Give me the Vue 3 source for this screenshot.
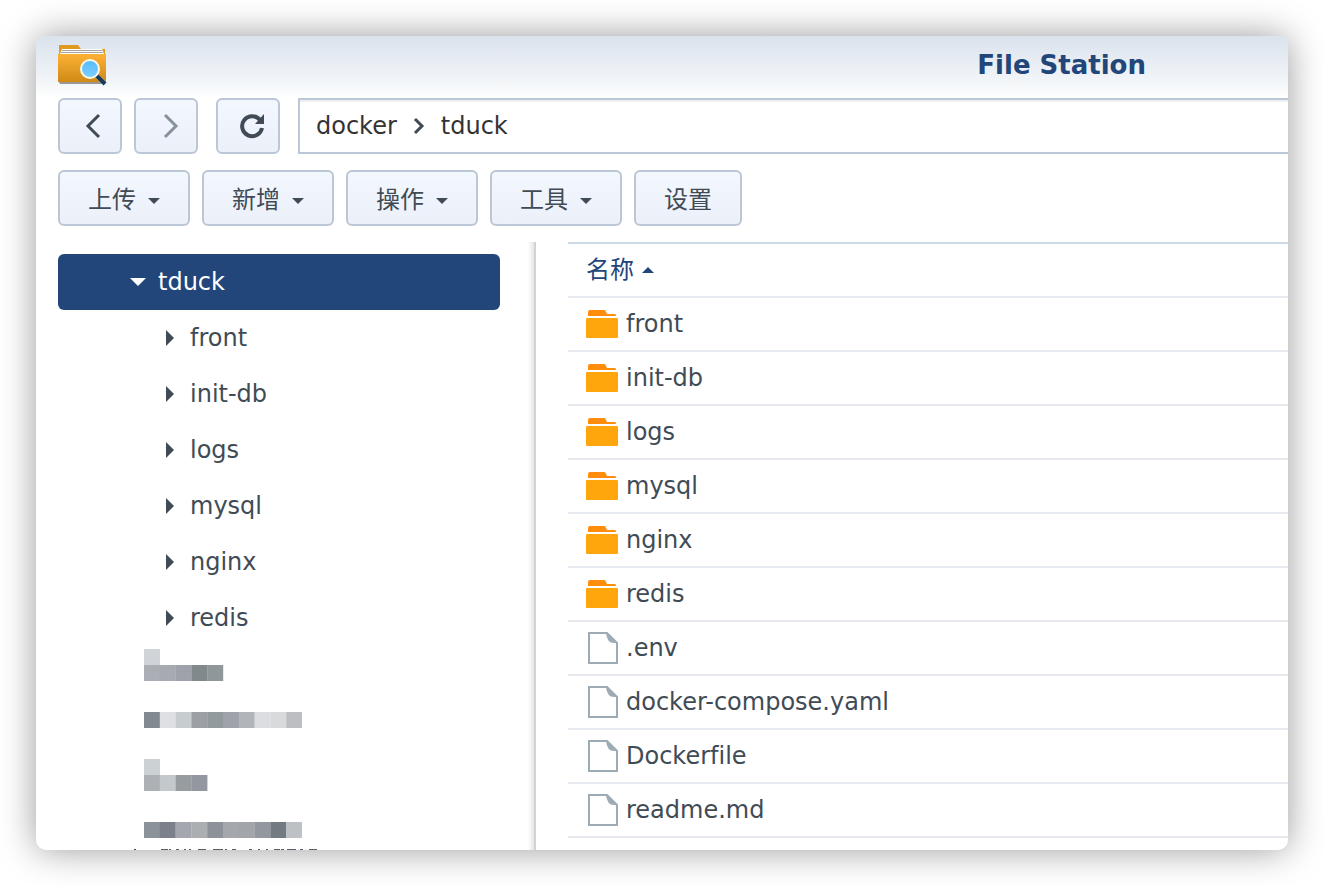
<script setup>
const menus = ['上传', '新增', '操作', '工具']
const folders = ['front', 'init-db', 'logs', 'mysql', 'nginx', 'redis']
const files = ['.env', 'docker-compose.yaml', 'Dockerfile', 'readme.md']

// Redacted tree entries: [column, row, colour] on a 10-column grid of cells
const line = (row, colours) => colours.map((c, i) => [i, row, c])
const mosaic = [
  { rows: 2, cells: [[0, 0, '#d0d4d8'], ...line(1, ['#abaeb4', '#a7aab0', '#9fa2ab', '#82898d', '#8f979a'])] },
  { rows: 1, cells: line(0, ['#838991', '#dfe0e3', '#c7cccf', '#9ca0a5', '#939a9e', '#9fa3a9', '#b1b5bb', '#dcdde1', '#d9dadc', '#bdbec4']) },
  { rows: 2, cells: [[0, 0, '#ccd2d3'], ...line(1, ['#adb1b6', '#c2c8cb', '#969c9f', '#9297a0'])] },
  { rows: 1, cells: line(0, ['#8c9299', '#7c808a', '#a4a7ae', '#abafb2', '#8d919a', '#a4a7ac', '#a2a5aa', '#9397a0', '#727b81', '#bdc1c5']) },
]
// Feet of the letters that stay visible under the last redaction
const feet = [[31, 7], [39, 2], [46, 3], [54, 2], [59, 2], [68, 8], [83, 8], [91, 2], [95, 2], [102, 4], [119, 3], [128, 2], [136, 2], [144, 6], [151, 3], [157, 9], [170, 3], [179, 8]]
</script>

<template>
  <div class="desktop">
    <main class="window">
      <header class="titlebar">
        <svg class="app-icon" width="50" height="42" viewBox="0 0 50 42" aria-hidden="true">
          <defs>
            <linearGradient id="folder-face" x1="0" y1="0" x2="0" y2="1">
              <stop offset="0" stop-color="#fbb234" />
              <stop offset="1" stop-color="#d08a17" />
            </linearGradient>
            <linearGradient id="lens" x1="0" y1="0" x2="0" y2="1">
              <stop offset="0" stop-color="#55bafb" />
              <stop offset="1" stop-color="#7fd0ff" />
            </linearGradient>
          </defs>
          <path d="M1 12V1h19l3 4h24v7z" fill="#e09a20" />
          <path d="M2 10l2-5h40l2 5z" fill="#fff" />
          <path d="M4 6h40v1H4zM3 8h42v1H3z" fill="#aaa39e" />
          <path d="M1 38h46v2H2z" fill="#756d68" opacity=".7" />
          <path d="M0 10h48v28H0z" fill="url(#folder-face)" />
          <path d="M38 31l9 9" stroke="#fff" stroke-width="5" opacity=".3" />
          <path d="M38 31l9 9" stroke="#17395a" stroke-width="4" />
          <circle cx="32" cy="25" r="9" fill="url(#lens)" stroke="#fff8e8" stroke-width="2" />
        </svg>
        <h1>File Station</h1>
      </header>

      <nav class="navbar" aria-label="导航">
        <button type="button" class="btn square" aria-label="后退">
          <svg width="24" height="28" viewBox="0 0 24 28"><path d="M18 3L7 14l11 11" fill="none" stroke="#414b55" stroke-width="3" /></svg>
        </button>
        <button type="button" class="btn square" aria-label="前进">
          <svg width="24" height="28" viewBox="0 0 24 28"><path d="M8 3l11 11L8 25" fill="none" stroke="#87919b" stroke-width="3" /></svg>
        </button>
        <button type="button" class="btn square refresh" aria-label="刷新">
          <svg width="28" height="28" viewBox="0 0 28 28"><path d="M24 16A10 10 0 1 1 22 8" fill="none" stroke="#414b55" stroke-width="4" /><path d="M26 2v10H17z" fill="#414b55" /></svg>
        </button>
        <div class="path">
          <a href="#docker">docker</a>
          <svg width="12" height="18" viewBox="0 0 12 18" aria-hidden="true"><path d="M2 2l7 7-7 7" fill="none" stroke="#414b55" stroke-width="3" /></svg>
          <a href="#tduck">tduck</a>
        </div>
      </nav>

      <div class="toolbar">
        <button v-for="m in menus" :key="m" type="button" class="btn menu">
          {{ m }}
          <svg width="12" height="6" viewBox="0 0 12 6" aria-hidden="true"><path d="M0 0h12L6 6z" fill="#414b55" /></svg>
        </button>
        <button type="button" class="btn settings">设置</button>
      </div>

      <div class="content">
        <aside class="tree">
          <button type="button" class="node root">
            <svg width="16" height="8" viewBox="0 0 16 8" aria-hidden="true"><path d="M0 0h16L8 8z" fill="#fff" /></svg>
            tduck
          </button>
          <button v-for="f in folders" :key="f" type="button" class="node">
            <svg width="8" height="16" viewBox="0 0 8 16" aria-hidden="true"><path d="M0 0v16l8-8z" fill="#414b55" /></svg>
            {{ f }}
          </button>
          <div class="redacted">
            <svg v-for="(m, i) in mosaic" :key="i" width="158" :height="m.rows * 16" :viewBox="`0 0 158 ${m.rows * 16}`" aria-hidden="true">
              <rect v-for="([x, y, c], j) in m.cells" :key="j" :x="x * 15.8" :y="y * 16" width="16" height="16" :fill="c" />
            </svg>
          </div>
          <svg class="feet" width="190" height="3" viewBox="0 0 190 3" aria-hidden="true">
            <path d="M4 0h2v2h-2z" fill="#414b55" />
            <rect v-for="([x, w], i) in feet" :key="i" :x="x" y="0" :width="w" height="2" fill="#59626b" />
          </svg>
        </aside>
        <div class="splitter"></div>
        <section class="listing">
          <table>
            <thead>
              <tr>
                <th scope="col">
                  <div class="cell">名称<svg width="12" height="6" viewBox="0 0 12 6" aria-hidden="true"><path d="M0 6h12L6 0z" fill="#22457a" /></svg></div>
                </th>
              </tr>
            </thead>
            <tbody>
              <tr v-for="f in folders" :key="f">
                <td>
                  <div class="cell">
                    <svg width="32" height="32" viewBox="0 0 32 32" aria-hidden="true">
                      <path d="M2 8V4q0-2 2-2h14q2 0 2 2l1 2h8q1 0 1 2z" fill="#ff8c0a" />
                      <path d="M1 10h30q1 0 1 1v18q0 1-1 1H1q-1 0-1-1V11q0-1 1-1z" fill="#ffa60d" />
                    </svg>
                    {{ f }}
                  </div>
                </td>
              </tr>
              <tr v-for="f in files" :key="f">
                <td>
                  <div class="cell">
                    <svg width="32" height="32" viewBox="0 0 32 32" aria-hidden="true">
                      <path d="M3 1h18l10 10v20H3z" fill="#fff" stroke="#9dabb5" stroke-width="2" />
                      <path d="M20 1h1l10 10h-3q-7 0-8-10z" fill="#9dabb5" />
                    </svg>
                    {{ f }}
                  </div>
                </td>
              </tr>
            </tbody>
          </table>
        </section>
      </div>
    </main>
  </div>
</template>

<style>
body { margin: 0; background: #fff; }
</style>

<style scoped>
* { box-sizing: border-box; }
.desktop {
  height: 100vh;
  padding: 36px;
  overflow: hidden;
  font: 24px/32px "DejaVu Sans", "Noto Sans CJK SC", sans-serif;
  font-variant-ligatures: none;
  color: #414b55;
}
.window {
  display: flex;
  flex-direction: column;
  height: 100%;
  overflow: hidden;
  border-radius: 10px;
  background: #fff;
  box-shadow: 0 0 36px rgba(0, 0, 0, .4);
}
svg { display: block; flex: none; }
.titlebar {
  display: flex;
  align-items: center;
  flex: none;
  height: 62px;
  padding: 0 142px 4px 22px;
  background: linear-gradient(#dae2ed, #f3f6f9 75%, #fff);
}
h1 {
  margin: 0 0 0 auto;
  color: #22457a;
  font: bold 26px/32px "DejaVu Sans", sans-serif;
}
.navbar { display: flex; flex: none; padding-left: 22px; }
.btn {
  display: flex;
  align-items: center;
  justify-content: center;
  height: 56px;
  padding: 0;
  border: 2px solid #bbc7d6;
  border-radius: 6px;
  background: linear-gradient(#f3f8ff, #ebf0f9);
  color: #414b55;
  font: inherit;
}
.square { width: 64px; margin-right: 12px; padding-left: 6px; }
.refresh { margin: 0 18px 0 6px; padding-left: 8px; }
.path {
  display: flex;
  align-items: center;
  flex: 1;
  gap: 16px;
  padding: 0 16px;
  border: solid #bbc7d6;
  border-width: 2px 0 2px 2px;
  box-shadow: inset 0 2px #f0f0f2;
}
.path a { color: #333; text-decoration: none; }
.toolbar { display: flex; flex: none; gap: 12px; padding: 16px 22px; }
.menu, .settings { padding-top: 4px; }
.menu { width: 132px; gap: 12px; }
.menu svg { margin-top: 2px; }
.settings { width: 108px; }
.content { display: flex; flex: 1; min-height: 0; }
.tree { flex: none; width: 492px; padding: 12px 28px 0 22px; overflow: hidden; }
.node {
  display: flex;
  align-items: center;
  width: 100%;
  height: 56px;
  padding: 0 0 0 108px;
  gap: 16px;
  border: 0;
  border-radius: 6px;
  background: none;
  color: inherit;
  font: inherit;
}
.root { padding-left: 72px; gap: 12px; background: #22457a; color: #fff; }
.redacted { display: flex; flex-direction: column; gap: 31px; padding: 3px 0 11px 86px; }
.feet { margin-left: 72px; }
.splitter {
  flex: none;
  width: 8px;
  border-right: 2px solid #d2d2d2;
  background: linear-gradient(90deg, #fff, #e4e4e4);
}
.listing { flex: 1; min-width: 0; margin-left: 32px; overflow: hidden; }
table { width: 100%; border-collapse: separate; border-spacing: 0; border-top: 2px solid #ced9e6; }
th, td { padding: 0; border-bottom: 2px solid #e6eaf0; font-weight: normal; text-align: left; }
th { color: #22457a; }
.cell { display: flex; align-items: center; gap: 8px; height: 52px; padding-left: 18px; }
</style>
